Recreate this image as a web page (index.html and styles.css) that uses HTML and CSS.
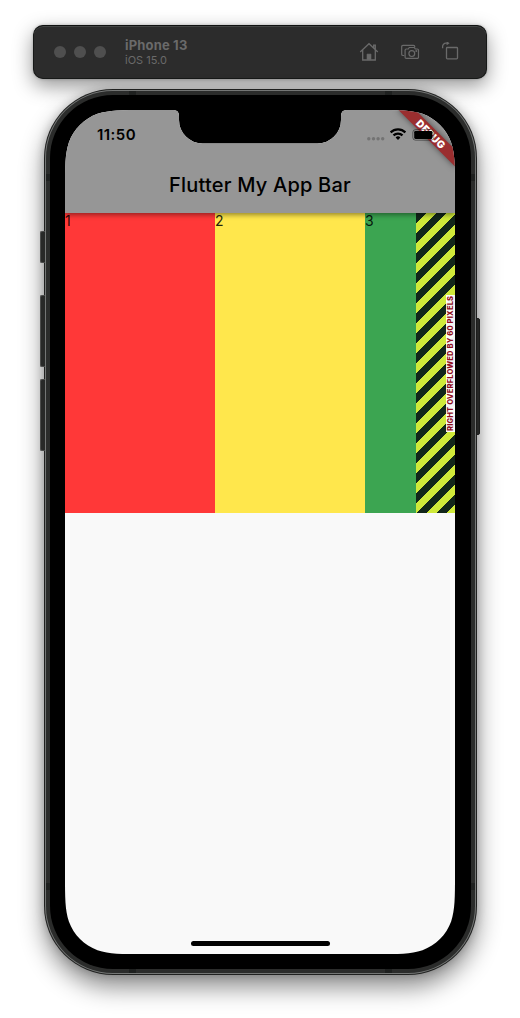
FILE: index.html
```
<!DOCTYPE html>
<html lang="en">
<head>
<meta charset="utf-8">
<title>iPhone 13 Simulator</title>
<link rel="stylesheet" href="styles.css">
</head>
<body>
<main class="desktop">
  <header class="toolbar">
    <div class="lights"><i class="light"></i><i class="light"></i><i class="light"></i></div>
    <div class="device-info">
      <strong class="device-name">iPhone 13</strong>
      <span class="device-os">iOS 15.0</span>
    </div>
    <div class="tools">
      <svg class="tool" width="20" height="20" viewBox="0 .3 20 20" fill="none" stroke="currentColor" stroke-width="1.3">
        <path d="M1.2 10.2 10 2l8.8 8.2M14.7 6.3V3.5h1.6v4.2M3.7 8.3v10h12.6v-10"/>
        <path d="M8 18v-5.6h4V18z" fill="currentColor" stroke-width=".6"/>
      </svg>
      <svg class="tool" width="20" height="20" viewBox="0 .8 20 20" fill="none" stroke="currentColor" stroke-width="1.2">
        <path d="M4.3 14.3H3a1.3 1.3 0 0 1-1.3-1.3V5.5A1.3 1.3 0 0 1 3 4.2h10.5a1.3 1.3 0 0 1 1.3 1.3v.6"/>
        <path d="M6.3 7.8h2l1-1.5h5l1 1.5h2a1.2 1.2 0 0 1 1.2 1.2v7a1.2 1.2 0 0 1-1.2 1.2h-11A1.2 1.2 0 0 1 5.100 16V9a1.2 1.2 0 0 1 1.2-1.2z"/>
        <circle cx="11.8" cy="12.4" r="2.9"/>
        <circle cx="16.3" cy="9.7" r=".4"/>
      </svg>
      <svg class="tool" width="20" height="20" viewBox="1 1 20 20" fill="none" stroke="currentColor" stroke-width="1.3">
        <rect x="6.5" y="6.5" width="11" height="11.300" rx=".8"/>
        <path d="M2.600 7.300V5.500a3.300 3.300 0 0 1 3.300-3.300h1.300"/>
        <path d="M6.600.1v4.200l3-2.100z" fill="currentColor" stroke="none"/>
      </svg>
    </div>
  </header>

  <section class="phone">
    <i class="key key-mute"></i><i class="key key-up"></i><i class="key key-down"></i><i class="key key-power"></i>
    <div class="rim"><div class="band">
      <i class="seam seam-h seam-tl"></i><i class="seam seam-h seam-tr"></i>
      <i class="seam seam-h seam-bl"></i><i class="seam seam-h seam-br"></i>
      <i class="seam seam-v seam-lt"></i><i class="seam seam-v seam-lb"></i>
      <i class="seam seam-v seam-rt"></i><i class="seam seam-v seam-rb"></i>
      <div class="bezel">
      <div class="screen">
        <div class="app-bar">
          <div class="status">
            <span class="time">11:50</span>
            <svg class="signals" width="72" height="20" viewBox="0 0 72 20">
              <g fill="#737373"><circle cx="3.8" cy="13.7" r="1.7"/><circle cx="8.5" cy="13.7" r="1.7"/><circle cx="13.1" cy="13.7" r="1.7"/><circle cx="17.7" cy="13.7" r="1.7"/></g>
              <g transform="translate(1.7 -.3)">
                <g fill="none" stroke="#000" stroke-width="2.2"><path d="M23.900 7.700a10.500 10.500 0 0 1 14.800 0"/><path d="M26.800 10.700a6.400 6.400 0 0 1 9 0"/></g>
                <path d="M31.300 15.200l-2.400-2.400a3.400 3.400 0 0 1 4.800 0z"/>
              </g>
              <rect x="47.8" y="4.600" width="21" height="10.600" rx="2.8" fill="none" stroke="#000" stroke-opacity=".42"/>
              <rect x="49.2" y="6" width="18.3" height="7.9" rx="1.300"/>
            </svg>
          </div>
          <h1 class="title">Flutter My App Bar</h1>
          <div class="debug">DEBUG</div>
        </div>
        <div class="row">
          <div class="box red">1</div>
          <div class="box yellow">2</div>
          <div class="box green">3</div>
          <div class="overflow"><span class="warning">RIGHT OVERFLOWED BY 60 PIXELS</span></div>
        </div>
        <div class="page"><i class="home-bar"></i></div>
      </div>
    </div></div></div>
  </section>
</main>
</body>
</html>
```
FILE: styles.css
```
* { box-sizing: border-box; }
body {
  margin: 0;
  background: #fff;
  font-family: Inter, Roboto, "Liberation Sans", sans-serif;
}
.desktop {
  width: 520px;
  height: 1018px;
  padding: 25px 33px 0;
  overflow: hidden;
}

/* Simulator toolbar */
.toolbar {
  display: flex;
  align-items: center;
  height: 54px;
  padding: 0 25px 0 21px;
  border: 1px solid #171918;
  border-top-color: #101211;
  border-radius: 10px;
  background: #2c2c2c;
  box-shadow: inset 0 1px 0 #434544, 0 7px 20px rgba(0, 0, 0, .42), 0 0 3px rgba(0, 0, 0, .25);
  color: #6a6a6a;
}
.lights { display: flex; gap: 8px; margin-left: -1px; }
.light { width: 12px; height: 12px; border-radius: 50%; background: #4f4f4f; }
.device-info {
  display: flex;
  flex-direction: column;
  margin: 1px auto 0 19px;
}
.device-name { font-size: 13px; line-height: 15px; font-weight: 700; letter-spacing: .17px; }
.device-os { font-size: 11px; line-height: 14px; letter-spacing: 0; }
.tools { display: flex; gap: 21px; }
.tool { display: block; }

/* Phone body */
.phone {
  position: relative;
  width: 433px;
  height: 886px;
  margin: 10px 0 0 11px;
  border-radius: 69px;
  box-shadow: 0 12px 24px rgba(0, 0, 0, .46), 0 0 10px rgba(0, 0, 0, .2);
  background: #202120;
  padding: 1px;
}
.rim {
  position: relative;
  height: 884px;
  padding: 1px;
  border-radius: 68px;
  background: #747675;
}
.band {
  position: relative;
  height: 882px;
  padding: 4px;
  border-radius: 67px;
  background: #2b2c2b;
}
.bezel {
  position: relative;
  height: 874px;
  padding: 15px 16px 15px 15px;
  border-radius: 63px;
  background: #000;
}
.key { position: absolute; left: -4px; width: 5px; background: #282928; border: 1px solid #4b4c4b; border-right: 0; border-radius: 2px 0 0 2px; }
.key-mute { top: 142px; height: 32px; }
.key-up { top: 206px; height: 72px; }
.key-down { top: 290px; height: 72px; }
.key-power { left: 432px; width: 4px; top: 229px; height: 117px; background: #262726; border: 1px solid #1c1d1c; border-radius: 0 2px 2px 0; }
.seam { position: absolute; background: #1e201f; }
.seam-h { width: 7px; height: 4px; }
.seam-v { width: 4px; height: 7px; }
.seam-tl { top: 0; left: 83px; }
.seam-tr { top: 0; right: 83px; }
.seam-bl { bottom: 0; left: 83px; }
.seam-br { bottom: 0; right: 83px; }
.seam-lt { top: 83px; left: 0; }
.seam-lb { bottom: 83px; left: 0; }
.seam-rt { top: 83px; right: 0; }
.seam-rb { bottom: 83px; right: 0; }

/* Display with rounded corners and the camera notch cut out */
.screen {
  display: flex;
  flex-direction: column;
  width: 390px;
  height: 844px;
  background: #f9f9f9;
  clip-path: path("M78.7 0H108.5Q114 0 114 6V10A23.5 23.5 0 0 0 137.5 33.500H252.5A23.5 23.5 0 0 0 276 10V6Q276 0 281.5 0H311.3C333.9 0 345.3 0 357.5 3.86C370.8 8.7 381.3 19.2 386.14 32.5C390 44.7 390 56.1 390 78.7V765.3C390 787.9 390 799.3 386.14 811.5C381.3 824.8 370.8 835.3 357.5 840.14C345.3 844 333.9 844 311.3 844H78.7C56.1 844 44.7 844 32.5 840.14C19.2 835.3 8.7 824.8 3.86 811.5C0 799.3 0 787.9 0 765.3V78.7C0 56.1 0 44.7 3.86 32.5C8.7 19.2 19.2 8.7 32.5 3.86C44.7 0 56.1 0 78.7 0Z");
}
.app-bar {
  position: relative;
  z-index: 1;
  flex: none;
  height: 103px;
  background: #969696;
  box-shadow: 0 2px 5px rgba(0, 0, 0, .42);
}
.status {
  position: relative;
  z-index: 2;
  display: flex;
  justify-content: space-between;
  height: 47px;
  padding: 15px 18px 0 32px;
}
.time { font-size: 15px; line-height: 20px; font-weight: 600; letter-spacing: .45px; }
.title {
  margin: 0;
  text-align: center;
  font-size: 20px;
  line-height: 56px;
  font-weight: 450;
  letter-spacing: .2px;
}
.debug {
  position: absolute;
  top: 28px;
  left: 350px;
  width: 80px;
  height: 12px;
  transform-origin: 40px -28px;
  transform: rotate(45deg);
  background: #9a2e2f;
  box-shadow: 0 0 6px rgba(0, 0, 0, .5);
  color: #fff;
  font-size: 10.2px;
  line-height: 12px;
  font-weight: 900;
  letter-spacing: .15px;
  text-align: center;
}

/* Overflowing row */
.row { display: flex; height: 300px; flex: none; }
.box { width: 150px; flex: none; font-size: 14px; line-height: 16px; color: rgba(0, 0, 0, .87); }
.red { background: #ff3838; }
.yellow { background: #ffe74c; }
.green { width: 51px; background: #3ca551; }
.overflow {
  position: relative;
  width: 39px;
  background: repeating-linear-gradient(135deg, #cfe93a 0 .707px, #12261a .707px 7.778px, #cfe93a 7.778px 14.142px);
}
.warning {
  position: absolute;
  right: 0;
  top: 82px;
  width: 9px;
  height: 137px;
  writing-mode: vertical-rl;
  transform: rotate(180deg);
  background: rgba(255, 255, 255, .95);
  color: #900c1c;
  font-size: 7.5px;
  line-height: 9px;
  font-weight: 800;
  letter-spacing: .18px;
  white-space: nowrap;
  text-align: center;
}
.page { display: flex; flex: 1; align-items: flex-end; justify-content: center; padding-bottom: 8px; }
.home-bar { width: 139px; height: 5px; border-radius: 3px; background: #000; }
```
